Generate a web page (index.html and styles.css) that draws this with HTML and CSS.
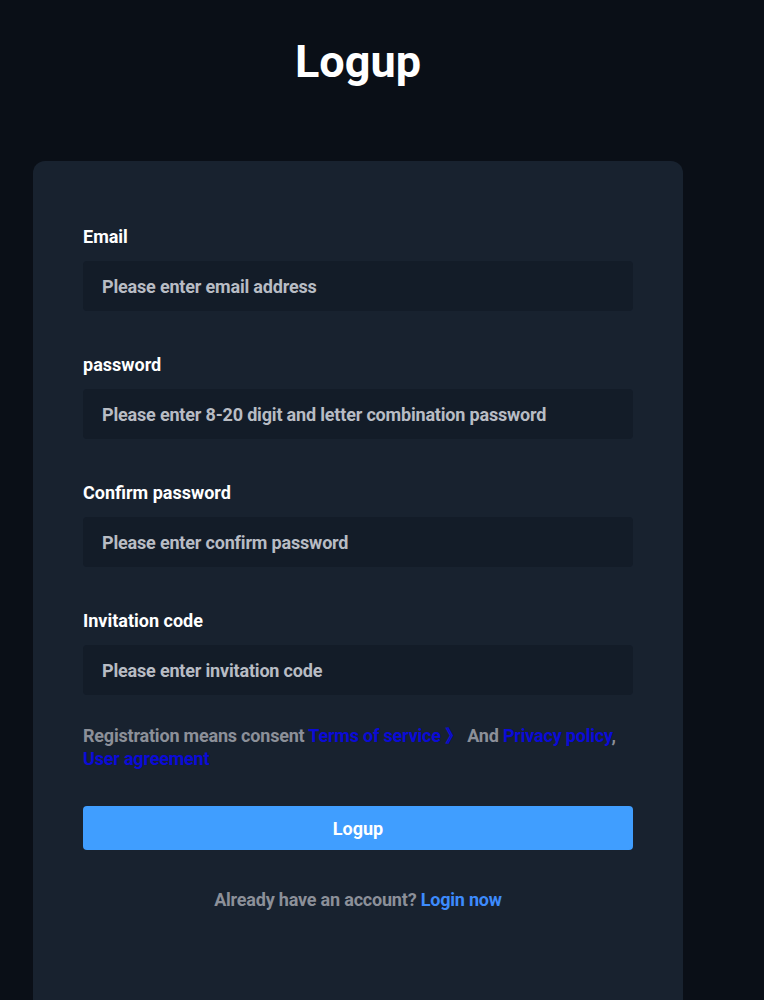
FILE: index.html
```html
<!DOCTYPE html>
<html lang="en">
<head>
<meta charset="utf-8">
<title>Logup</title>
<link rel="stylesheet" href="styles.css">
</head>
<body>
<div class="page">
  <h1 class="title">Logup</h1>
  <div class="card">
    <form class="form">
      <div class="field">
        <label class="label">Email</label>
        <div class="input">Please enter email address</div>
      </div>
      <div class="field">
        <label class="label">password</label>
        <div class="input">Please enter 8-20 digit and letter combination password</div>
      </div>
      <div class="field">
        <label class="label">Confirm password</label>
        <div class="input">Please enter confirm password</div>
      </div>
      <div class="field">
        <label class="label">Invitation code</label>
        <div class="input">Please enter invitation code</div>
      </div>
      <p class="consent">Registration means consent <a class="doc">Terms of service 》</a> And <a class="doc">Privacy policy</a>, <a class="doc">User agreement</a></p>
      <button type="button" class="submit">Logup</button>
      <p class="login">Already have an account? <a class="login-link">Login now</a></p>
    </form>
  </div>
</div>
</body>
</html>
```
FILE: styles.css
```css
html, body {
  margin: 0;
  padding: 0;
  background: #0a0f17;
}
body {
  font-family: Roboto, "Liberation Sans", sans-serif;
  font-weight: 700;
  color: #fff;
  height: 1000px;
  overflow: hidden;
}
.page {
  width: 650px;
  margin-left: 33px;
  padding-top: 34px;
}
.title {
  margin: 0;
  text-align: center;
  font-size: 45px;
  line-height: 56px;
  font-weight: 700;
  color: #fff;
}
.card {
  margin-top: 71px;
  background: #18222f;
  border-radius: 12px;
  padding: 64px 50px 120px;
}
.form {
  display: flex;
  flex-direction: column;
}
.field {
  display: flex;
  flex-direction: column;
  margin-bottom: 42px;
}
.field:nth-child(4) { margin-bottom: 29px; }
.label {
  font-size: 18px;
  line-height: 24px;
  color: #fff;
  margin-bottom: 12px;
}
.input {
  height: 50px;
  box-sizing: border-box;
  background: #131c28;
  border-radius: 4px;
  padding: 0 19px;
  display: flex;
  align-items: center;
  font-size: 18px;
  letter-spacing: -0.18px;
  color: #b8bcc4;
}
.consent {
  margin: 0;
  font-size: 18px;
  line-height: 23px;
  color: #8c9099;
  letter-spacing: -0.2px;
}
.doc {
  color: #0b0bd6;
}
.submit {
  margin-top: 36px;
  height: 44px;
  border: 0;
  border-radius: 4px;
  background: #409eff;
  color: #fff;
  font-family: inherit;
  font-weight: 700;
  font-size: 18px;
}
.login {
  margin: 38px 0 0;
  text-align: center;
  font-size: 18px;
  line-height: 24px;
  color: #8c9099;
  letter-spacing: -0.2px;
}
.login-link {
  color: #3d8bfd;
}
```
